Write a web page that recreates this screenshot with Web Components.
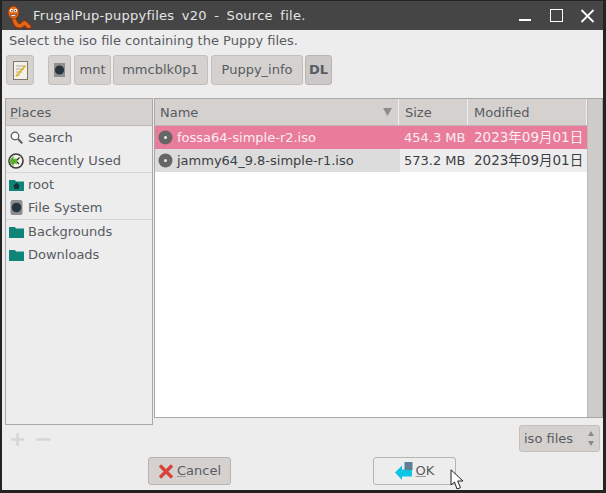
<!DOCTYPE html>
<html><head><meta charset="utf-8">
<style>
html,body{margin:0;padding:0;background:#222;overflow:hidden}
body{font:13px "DejaVu Sans","Noto Sans CJK JP",sans-serif;color:#565c62}
</style></head><body>
<file-dialog>
<title-bar slot="title">FrugalPup-puppyfiles v20 - Source file.</title-bar>
<div slot="label">Select the iso file containing the Puppy files.</div>
<path-bar slot="path">
  <tool-btn w="28"><svg width="15" height="19" viewBox="0 0 15 19" style="margin-top:1px"><rect x=".5" y=".5" width="14" height="18" fill="#f2f0e8" stroke="#7c7870"/><path d="M3 5h9M3 8h8M3 11h6M3 14h4" stroke="#aca89f"/><path d="M3 15.500L12.500 4.500" stroke="#e6b61c" stroke-width="1.800"/></svg></tool-btn>
  <tool-btn w="23" style="margin-left:14px"><svg width="11" height="14" viewBox="0 0 11 14"><rect width="11" height="14" fill="#8f8f8f"/><circle cx="5.500" cy="7" r="4.600" fill="#27343e"/></svg></tool-btn>
  <tool-btn w="37" style="margin-left:3px">mnt</tool-btn>
  <tool-btn w="95" style="margin-left:2px">mmcblk0p1</tool-btn>
  <tool-btn w="92" style="margin-left:3px">Puppy_info</tool-btn>
  <tool-btn w="27" style="margin-left:2px" active><b>DL</b></tool-btn>
</path-bar>
<places-pane slot="places">
  <place-item label="Search"><svg width="13" height="13" viewBox="0 0 13 13"><circle cx="5" cy="5" r="3.800" fill="#fff" stroke="#555" stroke-width="1.200"/><path d="M8 8l4.300 4.300" stroke="#555" stroke-width="1.800"/></svg></place-item>
  <place-item label="Recently Used" sep><svg width="16" height="16" viewBox="0 0 16 16"><circle cx="8" cy="8" r="7" fill="#f3f3ee" stroke="#3a3a3a" stroke-width="1.600"/><path d="M8 8l3.500-3.500M8 8l3 3" stroke="#222" stroke-width="1.100"/><path d="M1 8l4.500-5.500v3.200H9v5H5.500v3z" fill="#62b52f"/><path d="M4 6l3 3M4 9l2 2" stroke="#3c8a20" stroke-width=".8"/></svg></place-item>
  <place-item label="root"><svg width="15" height="12" viewBox="0 0 15 12"><path d="M0 1h6l1 1.500h8V12H0z" fill="#0e8578"/><path d="M7.500 3.500L11 7H10v3H5V7H4z" fill="#17333a"/></svg></place-item>
  <place-item label="File System" sep><svg width="13" height="15" viewBox="0 0 13 15"><rect width="12" height="15" x=".5" rx="2" fill="#8d8d8d"/><circle cx="6.500" cy="7.500" r="4.800" fill="#27343e"/></svg></place-item>
  <place-item label="Backgrounds"><svg width="15" height="12" viewBox="0 0 15 12"><path d="M0 1h6l1 1.500h8V12H0z" fill="#0e8578"/></svg></place-item>
  <place-item label="Downloads"><svg width="15" height="12" viewBox="0 0 15 12"><path d="M0 1h6l1 1.500h8V12H0z" fill="#0e8578"/></svg></place-item>
</places-pane>
<add-remove slot="addremove"></add-remove>
<file-list slot="list">
  <file-row name="fossa64-simple-r2.iso" size="454.3 MB" date="2023年09月01日" selected></file-row>
  <file-row name="jammy64_9.8-simple-r1.iso" size="573.2 MB" date="2023年09月01日"></file-row>
</file-list>
<filter-combo slot="filter">iso files</filter-combo>
<push-btn slot="cancel" label="ancel" mn="C" kind="cancel"><svg width="16" height="15" viewBox="0 0 16 15"><path d="M2 1.500L14 13.500M14 1.500L2 13.500" stroke="#d9413a" stroke-width="3.400"/></svg></push-btn>
<push-btn slot="ok" label="K" mn="O" kind="ok"><svg width="18" height="18" viewBox="0 0 18 18"><path d="M0 10.500L7 3.500v4h3V7h7v7.500H7V18z" fill="#0cc4e4"/><rect x="9.500" y="0" width="8" height="8" fill="#5c7f98"/></svg></push-btn>
<mouse-cursor slot="cursor"></mouse-cursor>
</file-dialog>
<script>
const def=(n,css,html,init)=>{customElements.define(n,class extends HTMLElement{
  connectedCallback(){if(this.shadowRoot)return;const s=this.attachShadow({mode:'open'});
  s.innerHTML='<style>'+css+'</style>'+(typeof html==='function'?html(this):html);init&&init(this,s)}})};
def('file-dialog',`
:host{display:block;width:606px;height:493px;box-sizing:border-box;background:#232323;padding:1px 3px 3px 2px}
.win{height:100%;display:flex;flex-direction:column}
.body{flex:1;background:#eeeded;display:flex;flex-direction:column;min-height:0;position:relative}
.lbl{height:25px;padding:0 0 0 7px;line-height:22px;box-sizing:border-box}
.path{padding-left:4px}
.main{display:flex;margin-top:13px;padding-left:3px;height:353px}
.left{width:148px;display:flex;flex-direction:column;flex:none}
.right{width:450px;display:flex;flex-direction:column;flex:none}
.foot{display:flex;height:28px;margin-top:6px}
.c1{margin-left:146px}.c2{margin-left:142px}
`,`<div class="win"><slot name="title"></slot><div class="body">
<div class="lbl"><slot name="label"></slot></div>
<div class="path"><slot name="path"></slot></div>
<div class="main"><div class="left"><slot name="places"></slot><slot name="addremove"></slot></div>
<div class="right"><slot name="list"></slot><slot name="filter"></slot></div></div>
<div class="foot"><div class="c1"><slot name="cancel"></slot></div><div class="c2"><slot name="ok"></slot></div></div>
<slot name="cursor"></slot></div></div>`);
def('title-bar',`
:host{display:flex;align-items:center;height:29px;background:#454545;color:#e3e6e8;flex:none;font-size:13px;word-spacing:3px;letter-spacing:.27px}
.t{margin-left:2px;flex:1}
svg{display:block;flex:none}
`,`<svg width="24" height="24" viewBox="0 0 24 24" style="margin-left:5px;margin-top:2px"><path d="M6.500 10C7 16 9 21 13 21C16 21 16 17 18 18C20 19 20 21.500 22 21.500" fill="none" stroke="#8a2c0c" stroke-width="5.500" stroke-linecap="round"/><path d="M6.500 10C7 16 9 21 13 21C16 21 16 17 18 18C20 19 20 21.500 22 21.500" fill="none" stroke="#e0661a" stroke-width="3.600" stroke-linecap="round"/><ellipse cx="6.500" cy="7.500" rx="5.500" ry="6.500" fill="#e26c18" stroke="#8a2c0c" stroke-width=".8"/><circle cx="4.500" cy="5.500" r="1.700" fill="#fff"/><circle cx="8.500" cy="5.500" r="1.700" fill="#fff"/><circle cx="4.800" cy="5.800" r=".7" fill="#222"/><circle cx="8.300" cy="5.800" r=".7" fill="#222"/><path d="M3 9.500c1 2.500 5 2.500 7 0z" fill="#fff" stroke="#6a2008" stroke-width=".6"/></svg>
<div class="t"><slot></slot></div>
<svg width="85" height="29" viewBox="0 0 85 29"><path d="M1 19h12" stroke="#fff" stroke-width="2"/><rect x="32.500" y="8.500" width="12" height="12" fill="none" stroke="#fff"/><path d="M63.500 9L75.500 21M75.500 9L63.500 21" stroke="#fff" stroke-width="1.800"/></svg>`);
def('path-bar',`:host{display:flex;height:30px}`,`<slot></slot>`);
def('tool-btn',`
:host{display:flex;align-items:center;justify-content:center;height:30px;box-sizing:border-box;background:#d5d1cf;border:1px solid #c2bfbd;border-radius:3px;flex:none;padding-bottom:1px}
:host([active]){background:#cdc8c8;border-color:#b9b5b4}
b{font-weight:bold}`,`<slot></slot>`,(e)=>{e.style.width=e.getAttribute('w')+'px'});
def('places-pane',`
:host{display:block;height:327px;box-sizing:border-box;border:1px solid #a8a8a8;flex:none}
.h{height:27px;background:#d5d1cf;border-bottom:1px solid #bdbab8;box-sizing:border-box;line-height:28px;padding-left:4px}
u{text-decoration-color:#aaa}`,`<div class="h"><u>P</u>laces</div><slot></slot>`);
def('place-item',`
:host{display:flex;align-items:center;height:23px;flex:none;padding-left:2px}
:host([sep]){box-shadow:0 1px 0 #d8d6d4;margin-bottom:1px}
.i{width:16px;display:flex;justify-content:center;flex:none}
span{margin-left:4px}
svg{display:block}`,e=>`<div class="i"><slot></slot></div><span>${e.getAttribute('label')}</span>`);
def('add-remove',`
:host{display:flex;align-items:center;gap:11px;padding:6px 0 0 5px;height:16px;flex:none}`,
`<svg width="15" height="15" viewBox="0 0 15 15"><path d="M7.500 1v13M1 7.500h13" stroke="#d4d6d8" stroke-width="2.600"/></svg><svg width="15" height="15" viewBox="0 0 15 15"><path d="M.5 7.500h14" stroke="#d4d6d8" stroke-width="2.600"/></svg>`);
def('file-list',`
:host{display:flex;height:320px;box-sizing:border-box;border:1px solid #a8a8a8;background:#fff;margin-left:1px;flex:none;width:449px}
.m{flex:1;min-width:0}
.h{display:flex;height:27px;background:#d5d1cf;border-bottom:1px solid #bdbab8;box-sizing:border-box}
.h div{box-sizing:border-box;padding-left:5px;border-right:1px solid #f0eeee;display:flex;align-items:center}
.n{width:244px;justify-content:space-between;padding-right:6px}
.s{width:69px;padding-left:6px!important}.d{flex:1;padding-left:6px!important}
.sb{width:15px;flex:none;background:#cecbc9;border-left:1px solid #bdbab8;box-sizing:border-box}
`,`<div class="m"><div class="h"><div class="n">Name<svg width="9" height="8" viewBox="0 0 9 8"><path d="M0 0h9L4.500 8z" fill="#8c8c8c"/></svg></div><div class="s">Size</div><div class="d">Modified</div></div><slot></slot></div><div class="sb"></div>`);
def('file-row',`
:host{display:flex;height:23px;align-items:center;background:#eeeded;color:#3c4045}
:host([selected]){background:#e87c9a;color:#fbeef2}
.n{width:245px;height:100%;display:flex;align-items:center;background:#dcdcdc;box-sizing:border-box;padding-left:3px;flex:none}
:host([selected]) .n{background:transparent}
.n svg{margin-right:4px;flex:none}
.s{width:69px;padding-left:4px;box-sizing:border-box;flex:none;white-space:nowrap}
.d{padding:0 0 3px 5px;white-space:nowrap;font-size:13.5px}`,
e=>`<div class="n"><svg width="15" height="15" viewBox="0 0 15 15"><circle cx="7.500" cy="7.500" r="7" fill="#666"/><circle cx="7.500" cy="7.500" r="1.500" fill="#eee"/></svg>${e.getAttribute('name')}</div><div class="s">${e.getAttribute('size')}</div><div class="d">${e.getAttribute('date')}</div>`);
def('filter-combo',`
:host{display:flex;align-items:center;align-self:flex-end;width:81px;height:27px;box-sizing:border-box;margin:7px 3px 0 0;background:#d5d1cf;border:1px solid #c2bfbd;border-radius:3px;padding:0 0 1px 4px;justify-content:space-between;flex:none}
svg{margin-right:5px}`,`<slot></slot><svg width="6" height="15" viewBox="0 0 6 15"><path d="M0 5L3 0l3 5zM0 10l3 5 3-5z" fill="#8a8a8a"/></svg>`);
def('push-btn',`
:host{display:flex;align-items:center;justify-content:center;width:83px;height:28px;box-sizing:border-box;border:1px solid #b6b3b1;border-radius:3px;background:#d5d1cf;flex:none}
:host([kind=ok]){background:#eeeded}
.l{margin-left:3px;padding-bottom:2px}
u{text-decoration-color:#999}
svg{display:block}`,e=>`<slot></slot><span class="l"><u>${e.getAttribute('mn')}</u>${e.getAttribute('label')}</span>`);
def('mouse-cursor',`
:host{position:absolute;left:448px;top:439px;width:14px;height:21px;display:block}`,
`<svg width="14" height="21" viewBox="0 0 14 21"><path d="M1 .8V16l3.500-3 2.500 7 3.500-1.300-2.800-6.700H13z" fill="#fff" stroke="#222" stroke-width="1"/></svg>`);
</script>
</body></html>
